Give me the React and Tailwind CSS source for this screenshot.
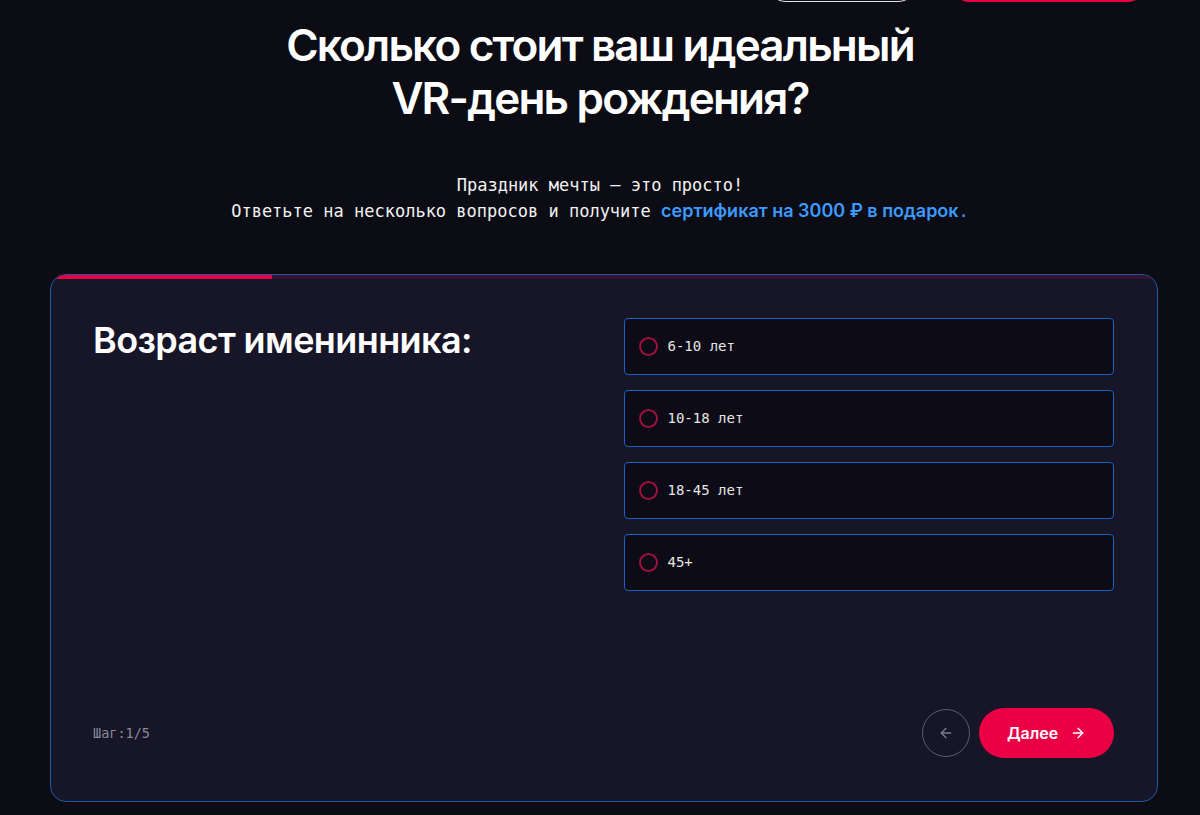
import React from "react";

const sans = { fontFamily: "Inter, 'Noto Sans', sans-serif" };
const mono = { fontFamily: "'DejaVu Sans Mono', 'Liberation Mono', monospace" };

const options = ["6-10 лет", "10-18 лет", "18-45 лет", "45+"];

export default function App() {
  return (
    <div className="min-h-[815px] w-full bg-[#0c0c15] text-white overflow-hidden" style={sans}>
      <div className="flex justify-end h-[2px] items-end pr-[53px] gap-[32px]">
        <div className="w-[152px] h-[40px] shrink-0 rounded-full border border-[#e5e5e5]" />
        <div className="w-[197px] h-[40px] shrink-0 rounded-full bg-[#eb0045]" />
      </div>
      <h1 className="mt-[17px] text-center text-[44px] leading-[53px] font-semibold tracking-[-1.8px]">
        Сколько стоит ваш идеальный
        <br />
        VR-день рождения?
      </h1>
      <div className="mt-[48px] text-center text-[17px] leading-[25px] text-[#f2f2f2]" style={mono}>
        <div>Праздник мечты — это просто!</div>
        <div>
          Ответьте на несколько вопросов и получите{" "}
          <span className="font-semibold text-[#3d9bff] text-[18px]" style={sans}>
            сертификат на 3000 ₽ в подарок
          </span>
          <span className="text-[#3d9bff]">.</span>
        </div>
      </div>
      <div className="ml-[50px] w-[1108px] mt-[50px] h-[528px] rounded-[16px] border border-[#1d5aa3] bg-[#171628] overflow-hidden flex flex-col">
        <div className="h-[4px] w-full bg-[#3a1230] shrink-0 flex">
          <div className="h-full w-[20%] bg-[#eb0045]" />
        </div>
        <div className="flex-1 flex flex-col pl-[42px] pr-[43px] pt-[39px] pb-[43px]">
          <div className="grid grid-cols-2 gap-[40px] flex-1">
            <div>
              <h2 className="text-[36px] leading-[44px] font-semibold tracking-[-0.6px]">Возраст именинника:</h2>
            </div>
            <div className="flex flex-col gap-[15px]">
              {options.map((o) => (
                <div
                  key={o}
                  className="h-[57px] rounded-[4px] border border-[#1565c0] bg-[#0c0b16] flex items-center pl-[14px] gap-[10px]"
                >
                  <div className="w-[19px] h-[19px] rounded-full border-2 border-[#a0103d]" />
                  <span className="text-[14px] text-[#e6e6e6]" style={mono}>{o}</span>
                </div>
              ))}
            </div>
          </div>
          <div className="flex items-center justify-between">
            <span className="text-[13.5px] text-[#8a8a99]" style={mono}>Шаг:1/5</span>
            <div className="flex items-center gap-[9px]">
              <button className="w-[48px] h-[48px] rounded-full border border-[#5c5c6a] flex items-center justify-center text-[#7c7c8a]">
                <svg width="16" height="16" viewBox="0 0 24 24" fill="none" stroke="currentColor" strokeWidth="2" strokeLinecap="round" strokeLinejoin="round">
                  <path d="M19 12H5" />
                  <path d="M12 19l-7-7 7-7" />
                </svg>
              </button>
              <button className="w-[135px] h-[50px] rounded-full bg-[#eb0045] flex items-center justify-center gap-[12px] text-white text-[16px] font-semibold">
                Далее
                <svg width="16" height="16" viewBox="0 0 24 24" fill="none" stroke="currentColor" strokeWidth="2" strokeLinecap="round" strokeLinejoin="round">
                  <path d="M5 12h14" />
                  <path d="M12 5l7 7-7 7" />
                </svg>
              </button>
            </div>
          </div>
        </div>
      </div>
    </div>
  );
}
